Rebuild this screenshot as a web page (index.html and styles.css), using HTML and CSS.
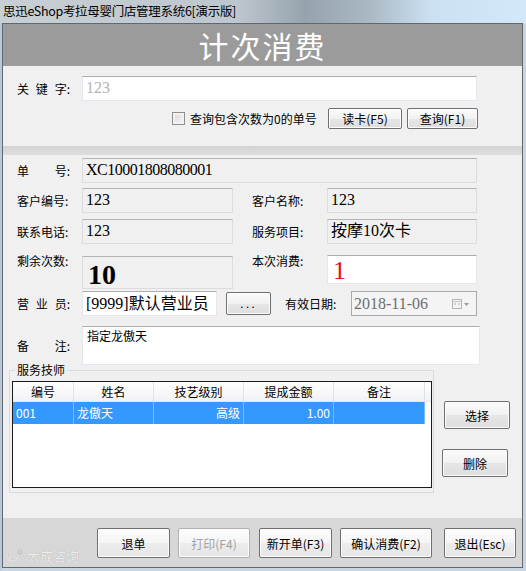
FILE: index.html
```html
<!DOCTYPE html>
<html lang="zh-CN">
<head>
  <meta charset="UTF-8">
  <title>计次消费</title>
  <link rel="stylesheet" href="styles.css">
</head>
<body>

  <!-- TITLE BAR -->
  <div class="titlebar">思迅eShop考拉母婴门店管理系统6[演示版]</div>

  <div class="frame">
    <div class="window">

      <div class="banner">计次消费</div>

      <!-- SEARCH -->
      <div class="search">
        <div class="row">
          <span class="lbl"><span class="spread"><i>关</i><i>键</i><i>字:</i></span></span>
          <div class="edit w395 hint">123</div>
        </div>
        <div class="row opts">
          <span class="check"></span>
          <span class="check-text">查询包含次数为0的单号</span>
          <button class="btn btn-read">读卡(F5)</button>
          <button class="btn btn-query">查询(F1)</button>
        </div>
      </div>
      <div class="sep"></div>

      <!-- ORDER FORM -->
      <div class="form">
        <div class="f-row r1">
          <span class="lbl"><span class="spread"><i>单</i><i>号:</i></span></span>
          <div class="ro w395 mono">XC10001808080001</div>
        </div>

        <div class="f-row r2">
          <span class="lbl">客户编号:</span>
          <div class="ro w151">123</div>
          <span class="lbl2">客户名称:</span>
          <div class="ro w150">123</div>
        </div>

        <div class="f-row r3">
          <span class="lbl">联系电话:</span>
          <div class="ro w151">123</div>
          <span class="lbl2">服务项目:</span>
          <div class="ro w150">按摩10次卡</div>
        </div>

        <div class="f-row r4">
          <span class="lbl">剩余次数:</span>
          <div class="ro w151 big">10</div>
          <span class="lbl2">本次消费:</span>
          <div class="edit w150 qty">1</div>
        </div>

        <div class="f-row r5">
          <span class="lbl"><span class="spread"><i>营</i><i>业</i><i>员:</i></span></span>
          <div class="edit w135 clerk">[9999]默认营业员</div>
          <button class="btn btn-more">...</button>
          <span class="lbl3">有效日期:</span>
          <div class="date">
            <span>2018-11-06</span>
            <svg width="18" height="12" viewBox="0 0 18 12">
              <rect x="0.5" y="1.5" width="9" height="9" fill="#f4f4f4" stroke="#b4b4b4"/>
              <line x1="0.5" y1="3.5" x2="9.5" y2="3.5" stroke="#c4c4c4"/>
              <rect x="2" y="5" width="2" height="2" fill="#d0d0d0"/>
              <rect x="6" y="5" width="2" height="2" fill="#d0d0d0"/>
              <path d="M12 5 L17 5 L14.5 8 Z" fill="#9a9a9a"/>
            </svg>
          </div>
        </div>

        <div class="f-row r6">
          <span class="lbl"><span class="spread"><i>备</i><i>注:</i></span></span>
          <div class="edit memo">指定龙傲天</div>
        </div>

        <!-- TECHNICIANS -->
        <div class="group-row">
          <fieldset class="group">
            <legend>服务技师</legend>
            <div class="grid">
              <div class="thead">
                <span class="c1">编号</span>
                <span class="c2">姓名</span>
                <span class="c3">技艺级别</span>
                <span class="c4">提成金额</span>
                <span class="c5">备注</span>
              </div>
              <div class="trow sel">
                <span class="c1">001</span>
                <span class="c2">龙傲天</span>
                <span class="c3 num">高级</span>
                <span class="c4 num">1.00</span>
                <span class="c5"></span>
              </div>
            </div>
          </fieldset>
          <div class="side">
            <button class="btn btn-pick">选择</button>
            <button class="btn btn-del">删除</button>
          </div>
        </div>
      </div>

      <!-- FOOTER BUTTONS -->
      <div class="footer">
        <button class="btn fb w73">退单</button>
        <button class="btn fb w72 off">打印(F4)</button>
        <button class="btn fb w73 ml9">新开单(F3)</button>
        <button class="btn fb w92">确认消费(F2)</button>
        <button class="btn fb w72 ml12">退出(Esc)</button>
        <span class="mark">
          <svg width="18" height="14" viewBox="0 0 18 14">
            <path d="M3 3 Q1 10 6 11 Q10 11 11 7" fill="none" stroke="#ececec" stroke-width="2"/>
            <path d="M3 3 Q1 10 6 11 Q10 11 11 7" fill="none" stroke="#b0b0b0" stroke-width="0.6"/>
            <circle cx="14" cy="3" r="2" fill="none" stroke="#b8b8b8" stroke-width="0.8"/>
          </svg>
          大成咨询
        </span>
      </div>

    </div>
  </div>

</body>
</html>
```

FILE: styles.css
```css
/* whole dialog, 526 x 571 */
body {
  margin: 0;
  width: 526px;
  height: 571px;
  overflow: hidden;
  font-family: "Noto Sans CJK SC", sans-serif;
  font-size: 12px;
  color: #000;
  background: #c6d1db;
}

i {
  font-style: normal;
}

/* Title bar (aero glass) */
.titlebar {
  height: 23px;
  line-height: 21px;
  padding-left: 3px;
  font-size: 12.5px;
  letter-spacing: -0.3px;
  white-space: nowrap;
  background: linear-gradient(to right, #c8cfd5 0%, #bec7ce 45%, #96a3ae 58%, #aab8c4 70%, #cbe0f2 82%, #d3e8f9 100%);
}

.frame {
  height: 548px;
  box-sizing: border-box;
  border-left: 2px solid #bdc8d3;
  border-right: 3px solid #c9d6e1;
  border-bottom: 3px solid #c9d6e1;
}

.window {
  height: 100%;
  box-sizing: border-box;
  border: 1px solid #5c6873;
  display: flex;
  flex-direction: column;
  background: #f0f0f0;
}

/* Grey header with the big caption */
.banner {
  height: 42px;
  line-height: 42px;
  background: #9b9b9b;
  color: #fff;
  font-size: 30px;
  letter-spacing: 2px;
  text-align: center;
}

/* Labels */
.lbl {
  flex: none;
  width: 65px;
}
.lbl2 {
  flex: none;
  width: 75px;
  margin-left: 19px;
}
.lbl3 {
  flex: none;
  width: 66px;
  margin-left: 14px;
}
.spread {
  display: flex;
  justify-content: space-between;
  width: 53px;
}

/* Text boxes */
.edit,
.ro {
  flex: none;
  height: 25px;
  box-sizing: border-box;
  padding-left: 3px;
  font-family: "Liberation Serif", "Noto Sans CJK SC", serif;
  font-size: 16px;
  line-height: 22px;
  white-space: nowrap;
  overflow: hidden;
}
.edit {
  background: #fff;
  border: 1px solid #e2e8ee;
  border-top-color: #abadb3;
}
.ro {
  background: #f0f0f0;
  border: 1px solid #dcdcdc;
  border-top-color: #b4b4b4;
}
.ro.mono {
  letter-spacing: -0.5px;
}
.hint {
  color: #b3b3b3;
}
.w395 { width: 395px; }
.w151 { width: 151px; }
.w150 { width: 150px; }
.w135 { width: 135px; }

/* Buttons (win7 style) */
.btn {
  flex: none;
  padding: 0;
  font-family: "Noto Sans CJK SC", sans-serif;
  font-size: 12px;
  color: #000;
  border: 1px solid #707070;
  border-radius: 2px;
  background: linear-gradient(#fbfbfb, #f1f1f1 50%, #e6e6e6 51%, #dedede);
  box-shadow: inset 0 0 0 1px #fcfcfc;
}

/* SEARCH AREA */
.search {
  height: 80px;
  box-sizing: border-box;
  padding-top: 10px;
}
.row {
  display: flex;
  align-items: center;
  padding-left: 14px;
}
.row.opts {
  margin-top: 7px;
  padding-left: 169px;
}
.check {
  flex: none;
  width: 13px;
  height: 13px;
  box-sizing: border-box;
  border: 1px solid #8e8f8f;
  background: linear-gradient(135deg, #d6d6d6, #f6f6f6);
  box-shadow: inset 0 0 0 2px #f2f2f2;
}
.check-text {
  margin-left: 5px;
  width: 126px;
  white-space: nowrap;
}
.btn-read {
  width: 74px;
  height: 21px;
  margin-left: 12px;
}
.btn-query {
  width: 71px;
  height: 21px;
  margin-left: 5px;
}

.sep {
  height: 9px;
  background: linear-gradient(#d3d3d3, #dedede);
}

/* ORDER FORM */
.form {
  flex: 1;
  padding-top: 3px;
}
.f-row {
  display: flex;
  align-items: center;
  padding-left: 14px;
}
.r2 { margin-top: 5px; }
.r3 { margin-top: 6px; }
.r4 {
  margin-top: 11px;
  align-items: flex-start;
}
.r4 .lbl,
.r4 .lbl2 {
  line-height: 14px;
  margin-top: -1px;
}
.r4 .lbl2 {
  margin-left: 19px;
}
.r5 { margin-top: 2px; }
.r6 { margin-top: 10px; }

.big {
  height: 33px;
  margin-top: 1px;
  padding-left: 5px;
  font-size: 28px;
  font-weight: bold;
  line-height: 36px;
}
.qty {
  height: 29px;
  padding-left: 5px;
  font-size: 26px;
  line-height: 30px;
  color: #e41313;
}
.clerk {
  line-height: 23px;
}
.btn-more {
  width: 45px;
  height: 23px;
  margin-left: 9px;
  font-family: "Liberation Sans", sans-serif;
  font-size: 13px;
  letter-spacing: 2px;
  line-height: 14px;
}

.date {
  flex: none;
  width: 126px;
  height: 25px;
  box-sizing: border-box;
  display: flex;
  align-items: center;
  justify-content: space-between;
  padding: 0 6px 0 2px;
  background: #f4f4f4;
  border: 1px solid #a9a9a9;
  font-family: "Liberation Serif", serif;
  font-size: 16px;
  color: #6e6e6e;
}

.memo {
  width: 398px;
  height: 39px;
  padding-left: 4px;
  font-family: "Noto Sans CJK SC", sans-serif;
  font-size: 12px;
  line-height: 18px;
}

/* Technicians group */
.group-row {
  display: flex;
  align-items: flex-start;
  margin-top: -2px;
}
.group {
  flex: none;
  width: 425px;
  height: 130px;
  box-sizing: border-box;
  margin: 0 0 0 6px;
  padding: 0;
  border: 1px solid #d5dbe0;
}
.group legend {
  margin-left: 5px;
  padding: 0 2px;
  font-size: 12px;
  line-height: 14px;
}
.grid {
  width: 420px;
  height: 107px;
  box-sizing: border-box;
  margin: 4px 0 0 2px;
  border: 1px solid #1b1b1b;
  background: #fff;
}
.thead,
.trow {
  display: flex;
}
.thead {
  height: 19px;
  line-height: 19px;
  background: linear-gradient(#ffffff, #f1f2f4);
  border-bottom: 1px solid #e3e6ea;
}
.thead span {
  text-align: center;
  border-right: 1px solid #dfe3e8;
  box-sizing: border-box;
}
.trow {
  height: 22px;
  line-height: 22px;
}
.trow span {
  box-sizing: border-box;
  padding: 0 3px;
  white-space: nowrap;
}
.trow.sel span {
  background: #3399ff;
  color: #fff;
  border-right: 1px solid #7dbaf7;
}
.trow .num {
  text-align: right;
}
.c1 { width: 61px; }
.c2 { width: 80px; }
.c3 { width: 90px; }
.c4 { width: 90px; }
.c5 { width: 91px; }

.side {
  display: flex;
  flex-direction: column;
  align-items: flex-start;
  padding-top: 38px;
}
.btn-pick {
  width: 66px;
  height: 28px;
  margin-left: 10px;
}
.btn-del {
  width: 66px;
  height: 28px;
  margin-top: 20px;
  margin-left: 8px;
}

/* FOOTER */
.footer {
  position: relative;
  height: 49px;
  box-sizing: border-box;
  display: flex;
  align-items: flex-start;
  padding: 10px 0 0 94px;
  background: #d7d7d7;
}
.fb {
  height: 30px;
  margin-left: 8px;
  background: linear-gradient(#fdfdfd, #f5f5f5 50%, #ececec 51%, #e6e6e6);
}
.fb:first-child {
  margin-left: 0;
}
.w73 { width: 73px; }
.w72 { width: 72px; }
.w92 { width: 92px; }
.ml9 { margin-left: 9px; }
.ml12 { margin-left: 12px; }
.fb.off {
  color: #a3a3a3;
  border-color: #adb2b5;
}

/* faint watermark of the image host */
.mark {
  position: absolute;
  left: 3px;
  bottom: 2px;
  display: flex;
  align-items: center;
  gap: 3px;
  font-size: 13px;
  color: #ececec;
  text-shadow: 0 0 1px #a8a8a8;
}
```
